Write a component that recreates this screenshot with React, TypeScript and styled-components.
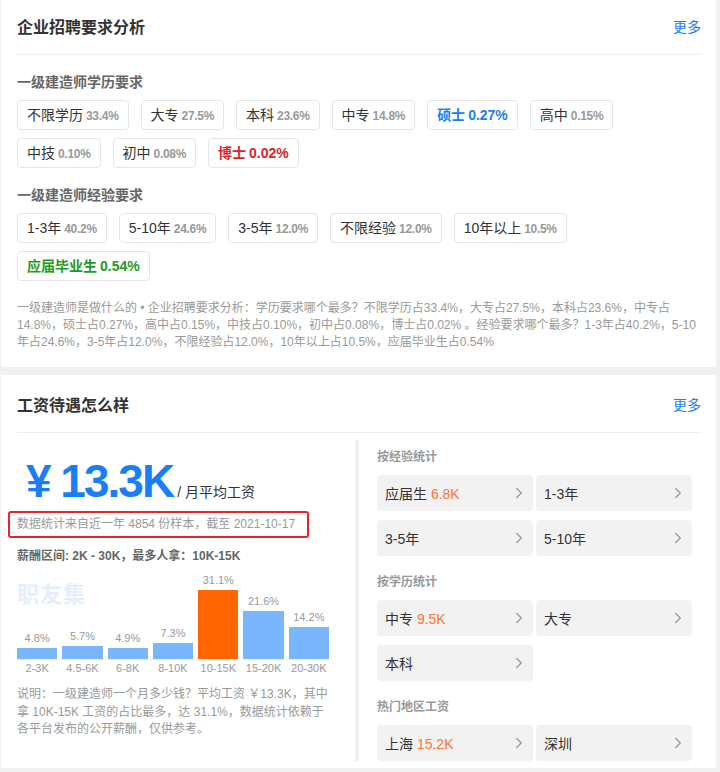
import React from 'react';
import styled, { createGlobalStyle } from 'styled-components';
import { ChevronRight } from 'lucide-react';

const GlobalStyle = createGlobalStyle`
  * { box-sizing: border-box; }
  html, body {
    margin: 0;
    padding: 0;
    background: #f0f0f0;
  }
  body {
    font-family: "Liberation Sans", "Noto Sans CJK SC", sans-serif;
    color: #333;
  }
`;

const BLUE = '#1b7ef5';

const Page = styled.div`
  margin-top: -3px;
  padding: 0 4px 0 1px;
  display: flex;
  flex-direction: column;
  gap: 8px;
`;

const Card = styled.section<{ $bottom: number }>`
  background: #fff;
  padding: 0 15px ${p => p.$bottom}px 16px;
`;

const CardHeader = styled.div`
  height: 58px;
  display: flex;
  align-items: center;
  justify-content: space-between;
  border-bottom: 1px solid #eee;
`;

const CardTitle = styled.h2`
  margin: 0;
  font-size: 16px;
  font-weight: bold;
  color: #333;
`;

const MoreLink = styled.a`
  font-size: 14px;
  color: ${BLUE};
  text-decoration: none;
  cursor: pointer;
`;

const SectionLabel = styled.h3<{ $top: number }>`
  margin: ${p => p.$top}px 0 8px;
  font-size: 14px;
  line-height: 20px;
  font-weight: bold;
  color: #666;
`;

const TagWrap = styled.div`
  display: flex;
  flex-wrap: wrap;
  gap: 8px 12px;
`;

type Tone = 'blue' | 'red' | 'green';
const toneColor: Record<Tone, string> = {
  blue: BLUE,
  red: '#d9232d',
  green: '#1d9b1d',
};

const Tag = styled.span<{ $tone?: Tone }>`
  display: inline-flex;
  align-items: baseline;
  gap: 3px;
  height: 30px;
  line-height: 28px;
  padding: 0 9px;
  border: 1px solid #e6e6e6;
  border-radius: 4px;
  font-size: 14px;
  color: ${p => (p.$tone ? toneColor[p.$tone] : '#333')};
  font-weight: ${p => (p.$tone ? 'bold' : 'normal')};
`;

const TagPct = styled.span<{ $tone?: Tone }>`
  font-size: ${p => (p.$tone ? 14 : 12)}px;
  font-weight: bold;
  letter-spacing: ${p => (p.$tone ? 0 : -0.3)}px;
  color: ${p => (p.$tone ? 'inherit' : '#999')};
`;

const Summary = styled.p`
  margin: 19px 0 0;
  font-size: 12px;
  line-height: 17px;
  color: #999;
`;

const SalaryBody = styled.div`
  display: flex;
  margin-top: 7px;
`;

const LeftCol = styled.div`
  flex: none;
  width: 338px;
  padding-right: 26px;
  display: flex;
  flex-direction: column;
`;

const AvgRow = styled.div`
  display: flex;
  align-items: baseline;
  gap: 4px;
  margin-top: 19px;
  padding-left: 9px;
`;

const AvgValue = styled.span`
  font-size: 46px;
  line-height: 45px;
  font-weight: bold;
  letter-spacing: -2px;
  color: ${BLUE};
`;

const AvgUnit = styled.span`
  font-size: 14px;
  color: #333;
`;

const SampleNote = styled.div`
  align-self: flex-start;
  margin: 7px 0 0 -9px;
  padding: 3px 12px 3px 7px;
  border: 2px solid #e3262b;
  border-radius: 3px;
  font-size: 12px;
  line-height: 17px;
  color: #999;
`;

const RangeLine = styled.div`
  margin-top: 10px;
  font-size: 12px;
  line-height: 16px;
  font-weight: bold;
  color: #666;
`;

const Chart = styled.div`
  position: relative;
  margin-top: 9px;
`;

const Watermark = styled.div`
  position: absolute;
  top: 11px;
  left: 0;
  font-size: 22px;
  line-height: 22px;
  font-weight: bold;
  letter-spacing: 1px;
  color: #e4eefc;
`;

const BarsRow = styled.div`
  display: flex;
  align-items: flex-end;
  gap: 5px;
  height: 87px;
  border-bottom: 1px solid #eee;
`;

const BarCol = styled.div`
  flex: 1;
  display: flex;
  flex-direction: column;
  text-align: center;
`;

const BarPct = styled.span`
  font-size: 11px;
  line-height: 14px;
  margin-bottom: 3px;
  color: #999;
`;

const Bar = styled.div<{ $active?: boolean }>`
  background: ${p => (p.$active ? '#ff6600' : '#7ab6fd')};
`;

const AxisRow = styled.div`
  display: flex;
  gap: 5px;
  margin-top: 1px;
`;

const AxisLabel = styled.span`
  flex: 1;
  text-align: center;
  font-size: 11px;
  line-height: 14px;
  color: #999;
`;

const ChartNote = styled.p`
  margin: 11px 0 0;
  font-size: 12px;
  line-height: 17.5px;
  color: #999;
`;

const RightCol = styled.div`
  flex: 1;
  border-left: 4px solid #f0f0f0;
  padding: 9px 9px 0 18px;
`;

const GroupLabel = styled.h4<{ $top?: number }>`
  margin: ${p => p.$top ?? 0}px 0 10px;
  font-size: 12px;
  line-height: 16px;
  font-weight: bold;
  color: #999;
`;

const ItemGrid = styled.div`
  display: grid;
  grid-template-columns: 1fr 1fr;
  gap: 9px 3px;
`;

const Item = styled.a`
  height: 36px;
  display: flex;
  align-items: center;
  justify-content: space-between;
  padding: 0 5px 0 8px;
  background: #f2f2f2;
  border-radius: 4px;
  font-size: 14px;
  color: #333;
  text-decoration: none;
  cursor: pointer;
`;

const ItemSalary = styled.span`
  color: #ff7433;
`;

const edu: { name: string; pct: string; tone?: Tone }[] = [
  { name: '不限学历', pct: '33.4%' },
  { name: '大专', pct: '27.5%' },
  { name: '本科', pct: '23.6%' },
  { name: '中专', pct: '14.8%' },
  { name: '硕士', pct: '0.27%', tone: 'blue' },
  { name: '高中', pct: '0.15%' },
  { name: '中技', pct: '0.10%' },
  { name: '初中', pct: '0.08%' },
  { name: '博士', pct: '0.02%', tone: 'red' },
];

const exp: { name: string; pct: string; tone?: Tone }[] = [
  { name: '1-3年', pct: '40.2%' },
  { name: '5-10年', pct: '24.6%' },
  { name: '3-5年', pct: '12.0%' },
  { name: '不限经验', pct: '12.0%' },
  { name: '10年以上', pct: '10.5%' },
  { name: '应届毕业生', pct: '0.54%', tone: 'green' },
];

const bars = [
  { range: '2-3K', pct: 4.8 },
  { range: '4.5-6K', pct: 5.7 },
  { range: '6-8K', pct: 4.9 },
  { range: '8-10K', pct: 7.3 },
  { range: '10-15K', pct: 31.1 },
  { range: '15-20K', pct: 21.6 },
  { range: '20-30K', pct: 14.2 },
];
const maxPct = Math.max(...bars.map(b => b.pct));

const groups: { title: string; items: { name: string; salary?: string }[] }[] = [
  {
    title: '按经验统计',
    items: [{ name: '应届生', salary: '6.8K' }, { name: '1-3年' }, { name: '3-5年' }, { name: '5-10年' }],
  },
  {
    title: '按学历统计',
    items: [{ name: '中专', salary: '9.5K' }, { name: '大专' }, { name: '本科' }],
  },
  {
    title: '热门地区工资',
    items: [{ name: '上海', salary: '15.2K' }, { name: '深圳' }],
  },
];

const TagList = ({ list }: { list: { name: string; pct: string; tone?: Tone }[] }) => (
  <TagWrap>
    {list.map(t => (
      <Tag key={t.name} $tone={t.tone}>
        {t.name}
        <TagPct $tone={t.tone}>{t.pct}</TagPct>
      </Tag>
    ))}
  </TagWrap>
);

export default function App() {
  return (
    <>
      <GlobalStyle />
      <Page>
        <Card $bottom={16}>
          <CardHeader>
            <CardTitle>企业招聘要求分析</CardTitle>
            <MoreLink>更多</MoreLink>
          </CardHeader>
          <SectionLabel $top={17}>一级建造师学历要求</SectionLabel>
          <TagList list={edu} />
          <SectionLabel $top={17}>一级建造师经验要求</SectionLabel>
          <TagList list={exp} />
          <Summary>
            一级建造师是做什么的 • 企业招聘要求分析：学历要求哪个最多？不限学历占33.4%，大专占27.5%，本科占23.6%，中专占14.8%，硕士占0.27%，高中占0.15%，中技占0.10%，初中占0.08%，博士占0.02% 。经验要求哪个最多？1-3年占40.2%，5-10年占24.6%，3-5年占12.0%，不限经验占12.0%，10年以上占10.5%，应届毕业生占0.54%
          </Summary>
        </Card>

        <Card $bottom={7}>
          <CardHeader>
            <CardTitle>工资待遇怎么样</CardTitle>
            <MoreLink>更多</MoreLink>
          </CardHeader>
          <SalaryBody>
            <LeftCol>
              <AvgRow>
                <AvgValue>¥ 13.3K</AvgValue>
                <AvgUnit>/ 月平均工资</AvgUnit>
              </AvgRow>
              <SampleNote>数据统计来自近一年 4854 份样本，截至 2021-10-17</SampleNote>
              <RangeLine>薪酬区间: 2K - 30K，最多人拿：10K-15K</RangeLine>
              <Chart>
                <Watermark>职友集</Watermark>
                <BarsRow>
                  {bars.map(b => (
                    <BarCol key={b.range}>
                      <BarPct>{b.pct}%</BarPct>
                      <Bar $active={b.pct === maxPct} style={{ height: Math.round(b.pct * 2.22) }} />
                    </BarCol>
                  ))}
                </BarsRow>
                <AxisRow>
                  {bars.map(b => (
                    <AxisLabel key={b.range}>{b.range}</AxisLabel>
                  ))}
                </AxisRow>
              </Chart>
              <ChartNote>
                说明：一级建造师一个月多少钱？平均工资 ￥13.3K，其中拿 10K-15K 工资的占比最多，达 31.1%，数据统计依赖于各平台发布的公开薪酬，仅供参考。
              </ChartNote>
            </LeftCol>
            <RightCol>
              {groups.map((g, i) => (
                <React.Fragment key={g.title}>
                  <GroupLabel $top={i === 0 ? 0 : 18}>{g.title}</GroupLabel>
                  <ItemGrid>
                    {g.items.map(it => (
                      <Item key={it.name}>
                        <span>
                          {it.name}
                          {it.salary && <ItemSalary> {it.salary}</ItemSalary>}
                        </span>
                        <ChevronRight size={18} strokeWidth={2} color="#a0a0a0" />
                      </Item>
                    ))}
                  </ItemGrid>
                </React.Fragment>
              ))}
            </RightCol>
          </SalaryBody>
        </Card>
      </Page>
    </>
  );
}
